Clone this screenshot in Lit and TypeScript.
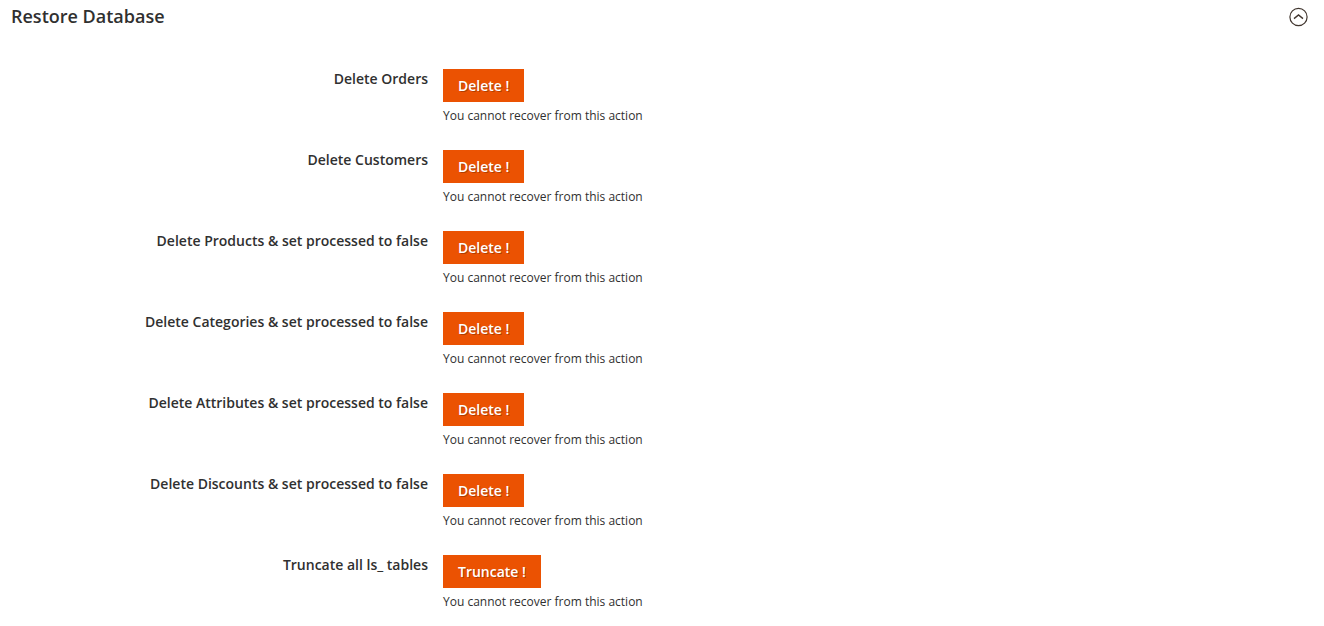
import { LitElement, html, css } from "lit";
import { customElement, state } from "lit/decorators.js";

interface Action {
  id: string;
  label: string;
  button: string;
}

const ACTIONS: Action[] = [
  { id: "orders", label: "Delete Orders", button: "Delete !" },
  { id: "customers", label: "Delete Customers", button: "Delete !" },
  { id: "products", label: "Delete Products & set processed to false", button: "Delete !" },
  { id: "categories", label: "Delete Categories & set processed to false", button: "Delete !" },
  { id: "attributes", label: "Delete Attributes & set processed to false", button: "Delete !" },
  { id: "discounts", label: "Delete Discounts & set processed to false", button: "Delete !" },
  { id: "tables", label: "Truncate all ls_ tables", button: "Truncate !" },
];

@customElement("app-root")
export class AppRoot extends LitElement {
  @state() private open = true;

  static styles = css`
    :host {
      display: block;
      background: #fff;
      color: #303030;
      font-family: "Open Sans", "Helvetica Neue", Helvetica, Arial, sans-serif;
      font-size: 14px;
    }
    .head {
      display: flex;
      align-items: flex-end;
      justify-content: space-between;
      padding: 5px 16px 7px 11px;
    }
    .title {
      margin: 0;
      font-size: 18px;
      font-weight: 600;
      line-height: 22px;
    }
    .toggle {
      display: flex;
      padding: 0;
      border: 0;
      background: none;
      color: #41362f;
      cursor: pointer;
    }
    .toggle.closed {
      transform: rotate(180deg);
    }
    .rows {
      display: grid;
      gap: 26px;
      padding: 35px 0 12px;
    }
    .rows[hidden] {
      display: none;
    }
    .row {
      display: grid;
      grid-template-columns: 428fr 881fr;
      column-gap: 15px;
    }
    .label {
      text-align: right;
      font-weight: 600;
      line-height: 20px;
    }
    .action {
      display: block;
      height: 33px;
      padding: 0 15px;
      border: 0;
      border-radius: 0;
      background: #eb5202;
      color: #fff;
      font: 600 14px/20px "Open Sans", sans-serif;
      text-shadow: 1px 1px 0 rgba(0, 0, 0, 0.25);
      cursor: pointer;
    }
    .note {
      margin: 5px 0 0;
      font-size: 12px;
      line-height: 17px;
    }
  `;

  render() {
    return html`
      <header class="head">
        <h2 class="title">Restore Database</h2>
        <button
          class="toggle ${this.open ? "" : "closed"}"
          aria-label="Toggle section"
          aria-expanded=${this.open}
          @click=${() => (this.open = !this.open)}
        >
          <svg width="19" height="20" viewBox="0 0 19 20" fill="none" stroke="currentColor">
            <circle cx="9.5" cy="10" r="8.6" stroke-width="1.2" />
            <path d="M5 11.6 9.5 8l4.5 3.6" stroke-width="1.4" />
          </svg>
        </button>
      </header>
      <div class="rows" ?hidden=${!this.open}>
        ${ACTIONS.map(
          (a) => html`
            <div class="row">
              <label class="label" for=${a.id}>${a.label}</label>
              <div>
                <button class="action" id=${a.id}>${a.button}</button>
                <p class="note">You cannot recover from this action</p>
              </div>
            </div>
          `
        )}
      </div>
    `;
  }
}
